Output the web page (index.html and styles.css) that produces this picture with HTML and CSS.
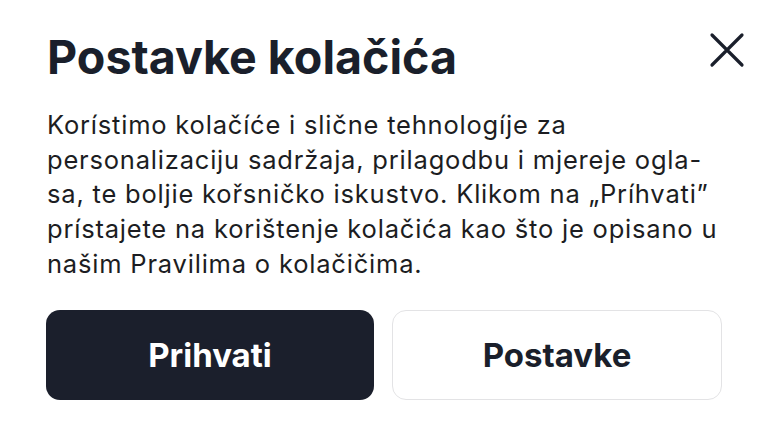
FILE: index.html
```html
<!DOCTYPE html>
<html lang="hr">
<head>
<meta charset="utf-8">
<link rel="stylesheet" href="styles.css">
</head>
<body>
<div class="panel">
  <div class="head">
    <h1 class="title">Postavke kolačića</h1>
    <button class="close" aria-label="Zatvori">
      <svg width="36" height="36" viewBox="0 0 36 36"><path d="M3 3L33 33M33 3L3 33" stroke="#1a1f2b" stroke-width="3.2" stroke-linecap="round" fill="none"/></svg>
    </button>
  </div>
  <p class="text">Korístimo kolačíće i slične tehnologíje za<br>personalizaciju sadržaja, prilagodbu i mjereje ogla-<br>sa, te boljie kořsničko iskustvo. Klikom na „Príhvati”<br>prístajete na korištenje kolačića kao što je opisano u<br>našim Pravilima o kolačičima.</p>
  <div class="actions">
    <button class="btn primary">Prihvati</button>
    <button class="btn secondary">Postavke</button>
  </div>
</div>
</body>
</html>
```
FILE: styles.css
```css
html, body { margin: 0; padding: 0; background: #ffffff; }
body { width: 768px; height: 432px; overflow: hidden; font-family: Inter, "Noto Sans", sans-serif; color: #1a1f2b; }
.panel { padding: 29px 46px 0 46px; }
.head { display: flex; justify-content: space-between; align-items: flex-start; }
.title { margin: 0 0 0 1px; font-size: 46.6px; font-weight: 700; line-height: 56px; letter-spacing: 0; color: #1a1f2b; }
.close { border: 0; background: none; padding: 0; margin: 3px -23px 0 0; width: 36px; height: 36px; display: flex; }
.close svg { display: block; }
.text { margin: 23px 0 0 1px; font-size: 25.5px; line-height: 34.7px; letter-spacing: 0.8px; color: #1c1d22; white-space: nowrap; }
.actions { display: flex; gap: 18px; margin-top: 28px; }
.btn { flex: 1; height: 90px; border-radius: 14px; font-family: Inter, "Noto Sans", sans-serif; font-size: 33px; font-weight: 700; }
.primary { background: #1b1f2c; color: #ffffff; border: 0; }
.secondary { background: #ffffff; color: #1a1f2b; border: 1.5px solid #e3e3e5; }
```
